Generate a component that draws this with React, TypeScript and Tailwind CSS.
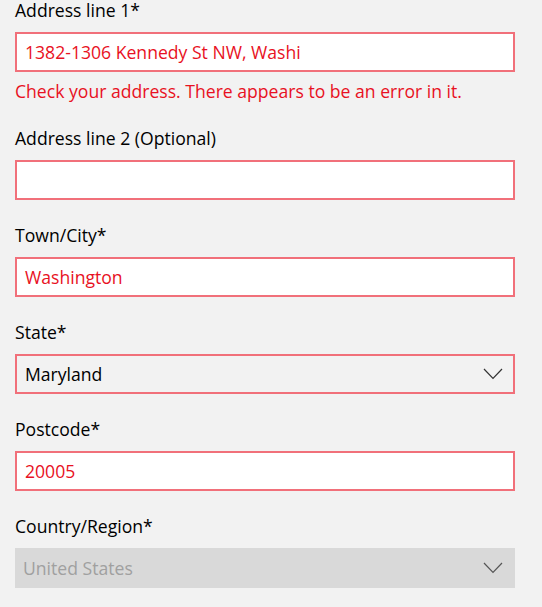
import React from "react";

const font = { fontFamily: '"Open Sans", "Noto Sans", sans-serif' };

function Chevron({ color }: { color: string }) {
  return (
    <svg width="20" height="12" viewBox="0 0 20 12" className="shrink-0">
      <path d="M1 1 L10 10.5 L19 1" fill="none" stroke={color} strokeWidth="1.2" />
    </svg>
  );
}

function Label({ children }: { children: React.ReactNode }) {
  return <div className="h-[24px] text-[17.6px] leading-[26px] text-black mb-[11px]">{children}</div>;
}

function TextField({ value }: { value?: string }) {
  return (
    <div className="h-[40px] w-[500px] border-2 border-[#f1707a] bg-white flex items-center px-[8px] text-[17.6px] leading-[24px] text-[#e81123]">
      {value}
    </div>
  );
}

function Field({ label, value }: { label: string; value?: string }) {
  return (
    <div className="mb-[22px]">
      <Label>{label}</Label>
      <TextField value={value} />
    </div>
  );
}

export default function App() {
  return (
    <div className="w-[542px] h-[607px] overflow-hidden bg-[#f2f2f2]" style={font}>
      <div className="pl-[15px] -mt-[3px]">
        <div className="mb-[22px]">
          <Label>Address line 1*</Label>
          <TextField value="1382-1306 Kennedy St NW, Washi" />
          <div className="h-[24px] text-[17.6px] leading-[24px] text-[#e81123] mt-[7px]">
            Check your address. There appears to be an error in it.
          </div>
        </div>
        <Field label="Address line 2 (Optional)" />
        <Field label="Town/City*" value="Washington" />
        <div className="mb-[22px]">
          <Label>State*</Label>
          <div className="h-[40px] w-[500px] border-2 border-[#f1707a] bg-[#f2f2f2] flex items-center justify-between pl-[8px] pr-[10px] text-[17.6px] leading-[24px] text-black">
            <span>Maryland</span>
            <Chevron color="#333333" />
          </div>
        </div>
        <Field label="Postcode*" value="20005" />
        <div>
          <Label>Country/Region*</Label>
          <div className="h-[40px] w-[500px] bg-[#d9d9d9] flex items-center justify-between pl-[8px] pr-[12px] text-[17.6px] leading-[24px] text-[#a0a0a0]">
            <span>United States</span>
            <Chevron color="#555555" />
          </div>
        </div>
      </div>
    </div>
  );
}
